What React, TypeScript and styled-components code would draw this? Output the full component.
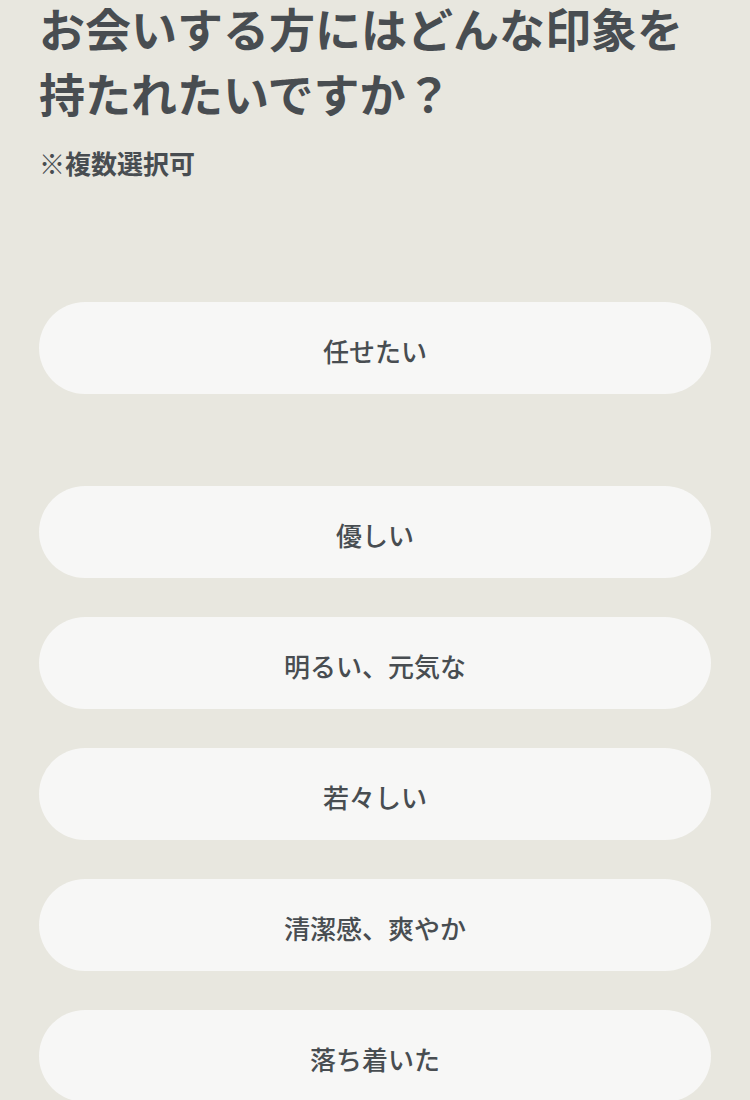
import React from "react";
import styled, { createGlobalStyle } from "styled-components";

const GlobalStyle = createGlobalStyle`
  html, body {
    margin: 0;
    padding: 0;
    background: #e8e7df;
  }
  body {
    font-family: "Noto Sans CJK JP", "Noto Sans", sans-serif;
    color: #484d51;
  }
`;

const Page = styled.div`
  padding: 0 39px;
  min-height: 1100px;
  overflow: hidden;
`;

const Title = styled.h1`
  display: flex;
  flex-direction: column;
  gap: 11px;
  margin: 0;
  font-size: 46px;
  line-height: 54px;
  font-weight: 700;
`;

const Note = styled.p`
  margin: 26px 0 0;
  font-size: 26px;
  line-height: 36px;
  font-weight: 700;
`;

const Options = styled.div<{ $top: number }>`
  display: flex;
  flex-direction: column;
  gap: 39px;
  margin-top: ${p => p.$top}px;
`;

const Option = styled.button`
  display: flex;
  align-items: center;
  justify-content: center;
  width: 100%;
  height: 92px;
  padding: 4px 0 0;
  border: none;
  border-radius: 46px;
  background: #f7f7f6;
  color: #484d51;
  font-family: inherit;
  font-size: 26px;
  font-weight: 500;
  cursor: pointer;
`;

const FIRST = ["任せたい"];
const REST = ["優しい", "明るい、元気な", "若々しい", "清潔感、爽やか", "落ち着いた"];

export default function App() {
  return (
    <>
      <GlobalStyle />
      <Page>
        <Title>
          <span>お会いする方にはどんな印象を</span>
          <span>持たれたいですか？</span>
        </Title>
        <Note>※複数選択可</Note>
        <Options $top={121}>
          {FIRST.map(label => (
            <Option key={label}>{label}</Option>
          ))}
        </Options>
        <Options $top={92}>
          {REST.map(label => (
            <Option key={label}>{label}</Option>
          ))}
        </Options>
      </Page>
    </>
  );
}
